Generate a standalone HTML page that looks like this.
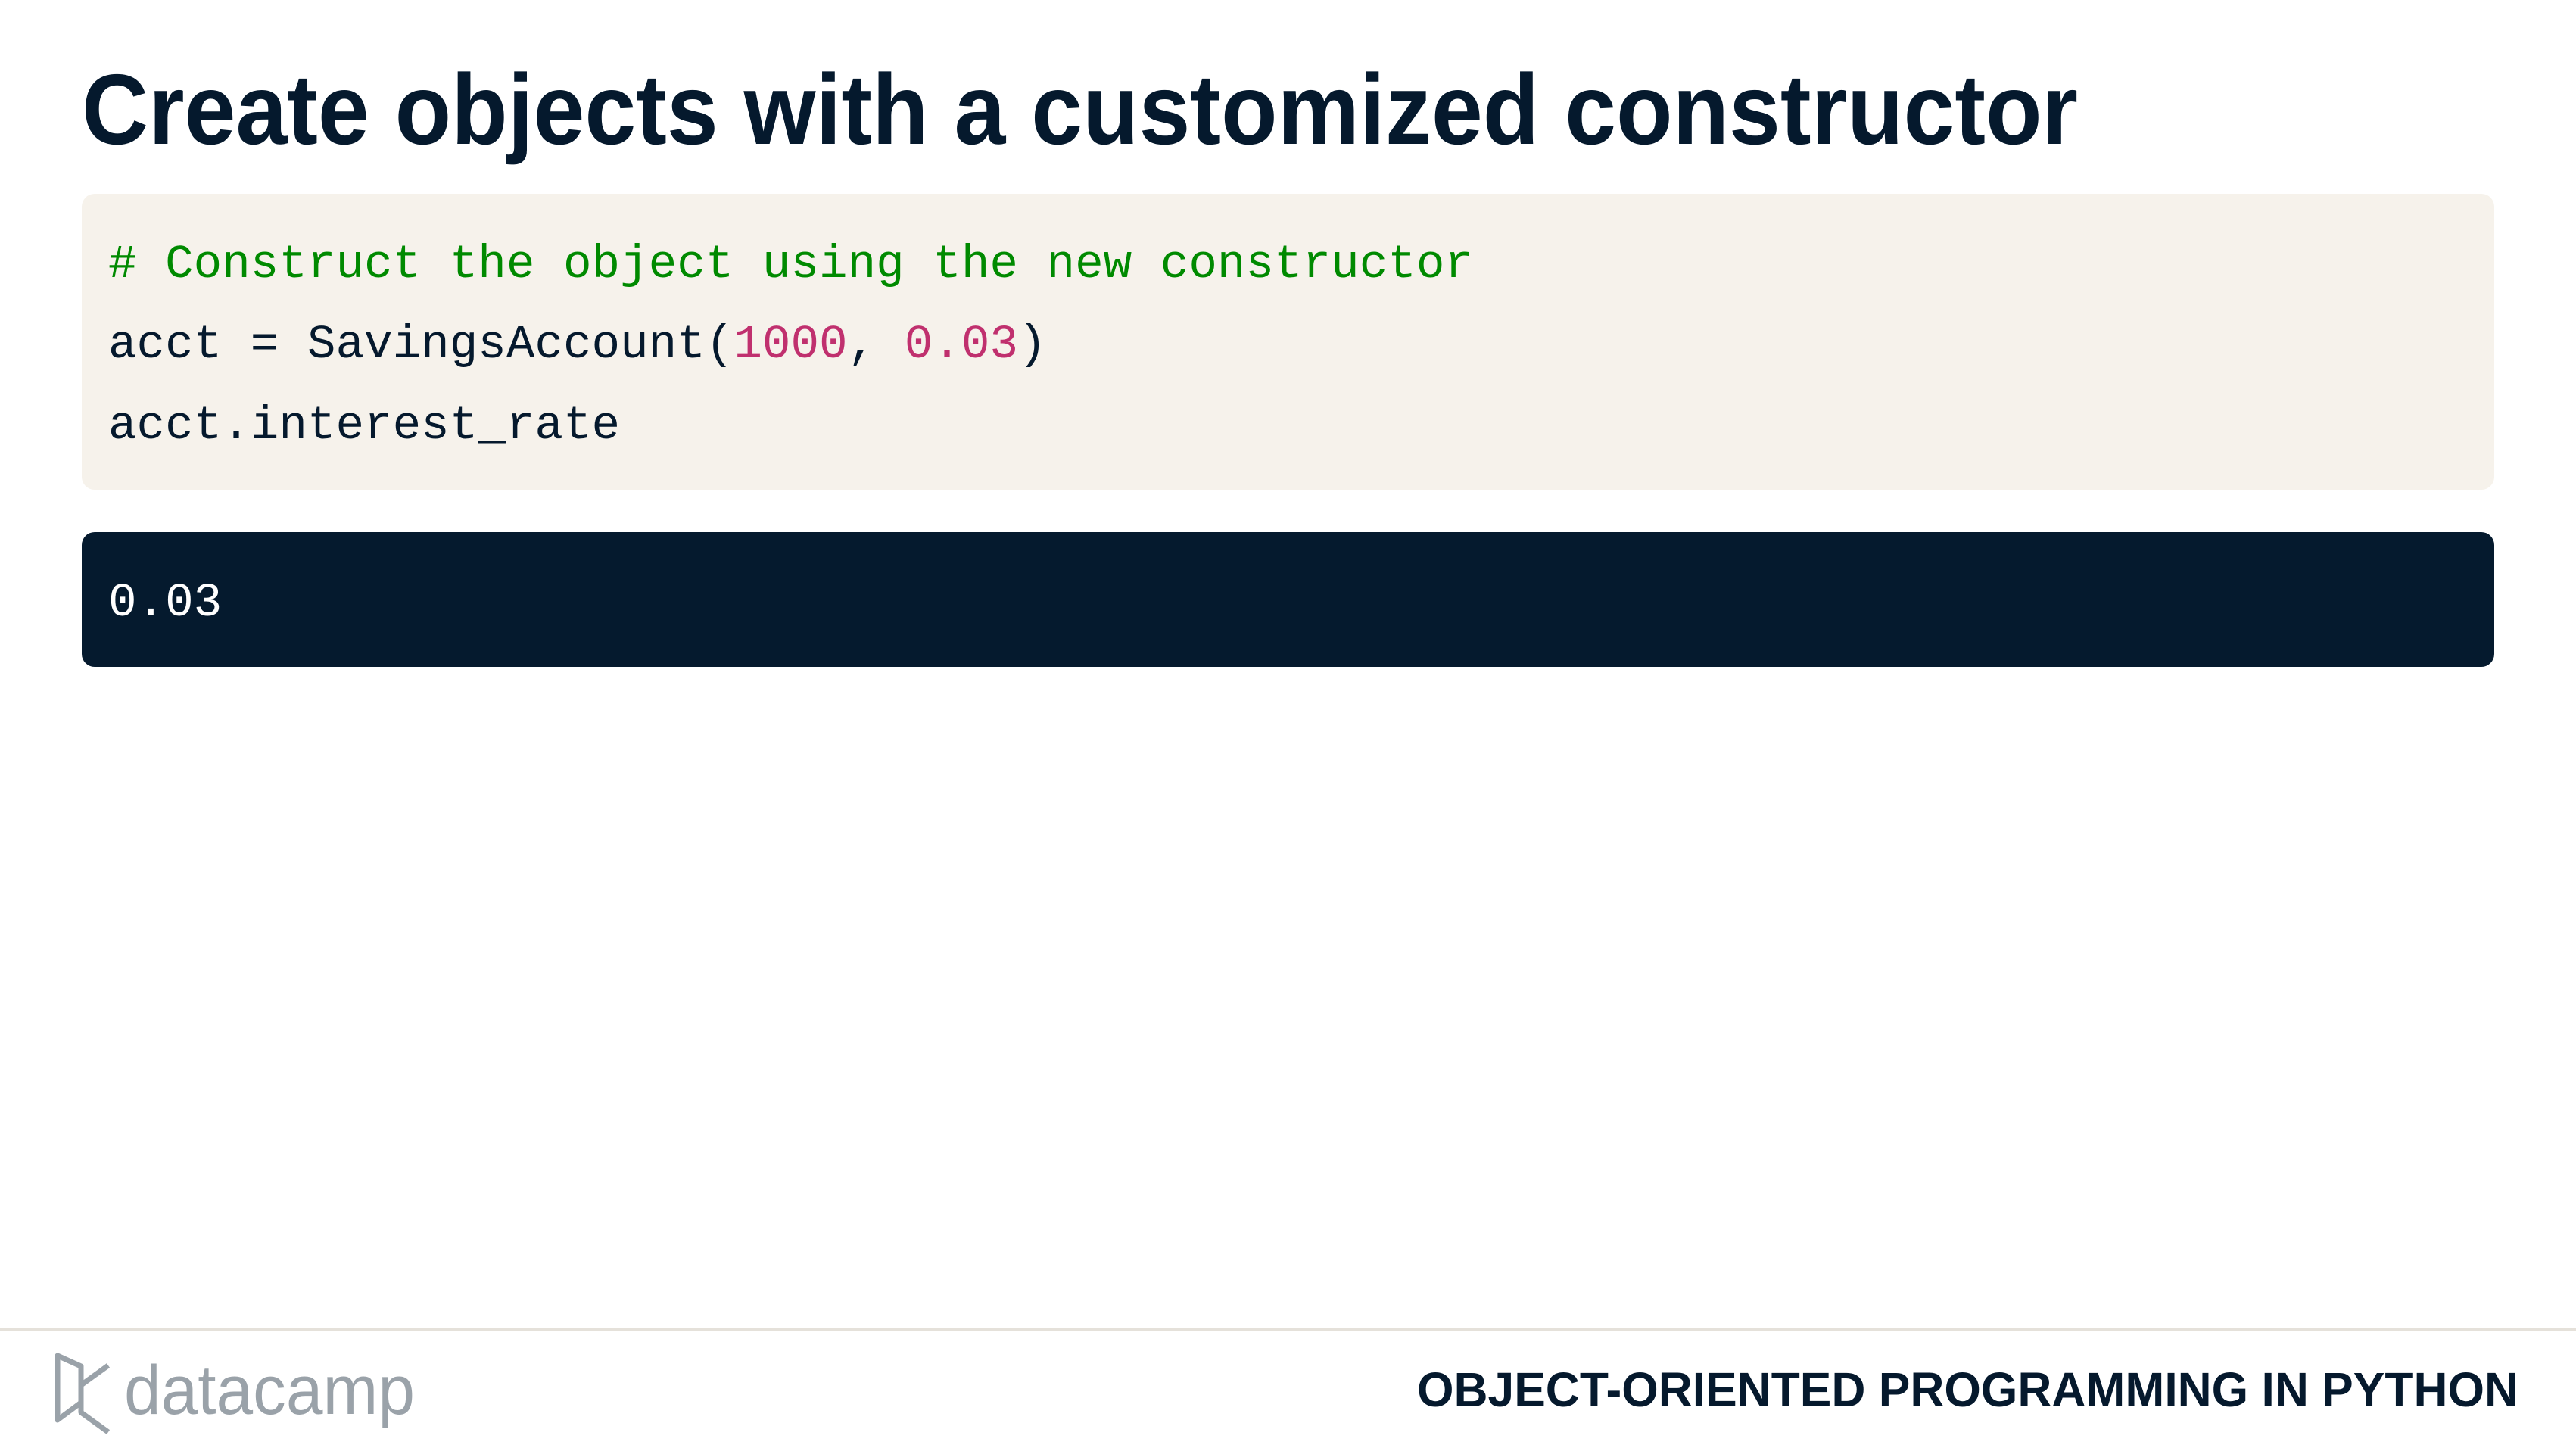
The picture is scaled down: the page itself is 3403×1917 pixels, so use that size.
<!DOCTYPE html>
<html><head><meta charset="utf-8"><style>
html,body{margin:0;padding:0;width:3403px;height:1917px;background:#fff;overflow:hidden;position:relative;font-family:"Liberation Sans",sans-serif}
.box{position:absolute;left:108px;width:3187px;border-radius:17px}
.code{top:256px;height:391px;background:#f6f2eb}
.out{top:703px;height:178px;background:#051a2e}
.ln{position:absolute;left:143px;font-family:"Liberation Mono","DejaVu Sans Mono",monospace;font-size:62.6px;white-space:pre;line-height:1}
.c{color:#008a00}.d{color:#05192d}.n{color:#c0306e}
</style></head><body>
<svg style="position:absolute;left:0;top:0" width="3403" height="1917">
<text x="108" y="190" font-family="Liberation Sans" font-weight="bold" font-size="132" fill="#05192d" textLength="2637" lengthAdjust="spacingAndGlyphs">Create objects with a customized constructor</text>
<rect x="0" y="1754" width="3403" height="5" fill="#e5e1da"/>
<text x="1872" y="1858" font-family="Liberation Sans" font-weight="bold" font-size="64" fill="#05192d" textLength="1455" lengthAdjust="spacingAndGlyphs">OBJECT-ORIENTED PROGRAMMING IN PYTHON</text>
<g fill="none" stroke="#9aa2a9" stroke-width="7" stroke-linejoin="round">
<path d="M76 1791 L76 1876 L107 1853 L107 1805 Z"/>
<path d="M107 1830 L143 1804"/>
<path d="M107 1853 L107 1866 L143 1892"/>
</g>
<text x="164" y="1868" font-family="Liberation Sans" font-size="92" fill="#9aa2a9" textLength="384" lengthAdjust="spacingAndGlyphs">datacamp</text>
</svg>
<div class="box code"></div>
<div class="box out"></div>
<div class="ln c" style="top:319px"># Construct the object using the new constructor</div>
<div class="ln d" style="top:425px">acct = SavingsAccount(<span class="n">1000</span>, <span class="n">0.03</span>)</div>
<div class="ln d" style="top:532px">acct.interest_rate</div>
<div class="ln" style="top:766px;color:#fff">0.03</div>
</body></html>
